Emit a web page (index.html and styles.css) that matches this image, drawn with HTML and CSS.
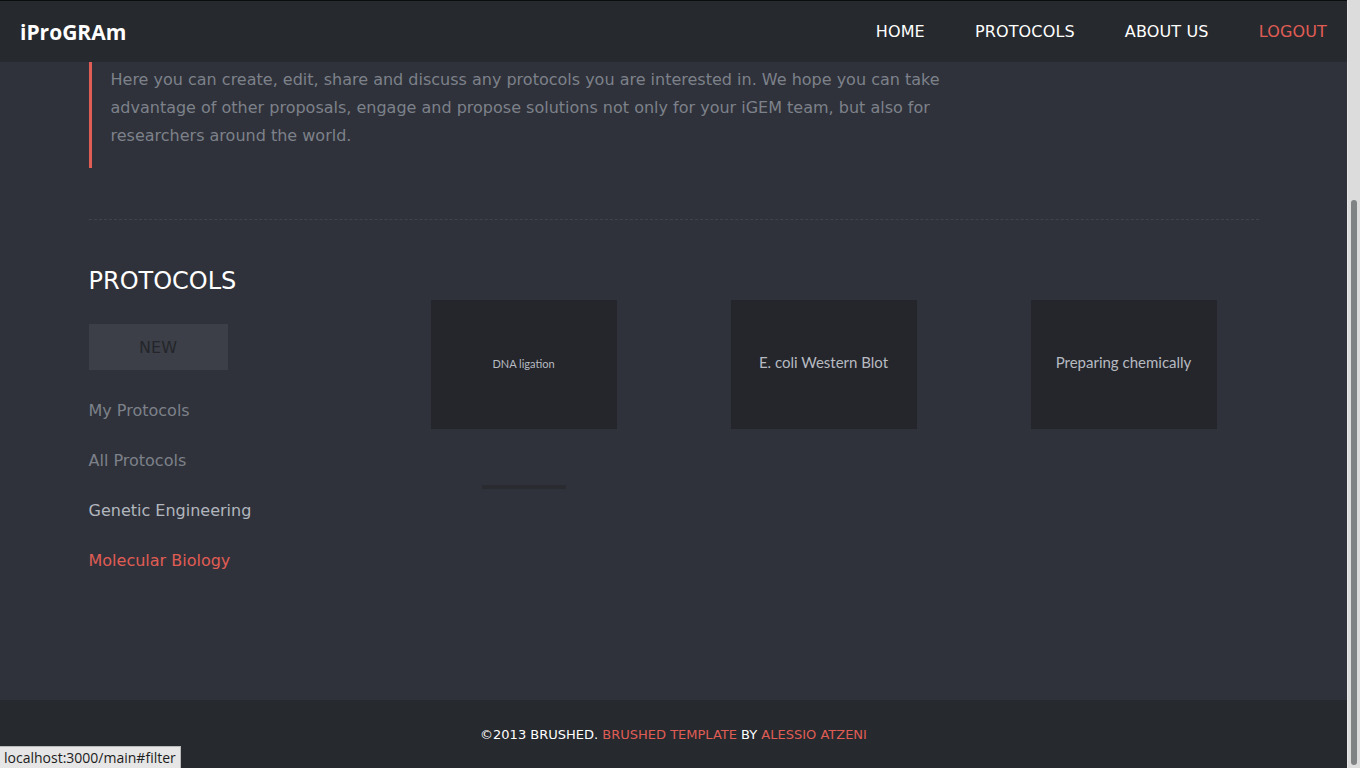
FILE: index.html
```html
<!DOCTYPE html>
<html lang="en">
<head>
<meta charset="utf-8">
<title>iProGRAm</title>
<link rel="stylesheet" href="styles.css">
</head>
<body>
<div class="page">
  <header class="nav">
    <a class="logo" href="#">iProGRAm</a>
    <nav class="menu">
      <a href="#">HOME</a>
      <a href="#">PROTOCOLS</a>
      <a href="#">ABOUT US</a>
      <a href="#" class="logout">LOGOUT</a>
    </nav>
  </header>
  <main class="main">
    <div class="container">
      <blockquote class="intro">Here you can create, edit, share and discuss any protocols you are interested in. We hope you can take advantage of other proposals, engage and propose solutions not only for your iGEM team, but also for researchers around the world.</blockquote>
      <div class="divider"></div>
      <section class="protocols">
        <aside class="sidebar">
          <h2 class="title">PROTOCOLS</h2>
          <a class="btn-new" href="#">NEW</a>
          <ul class="filters">
            <li><a href="#">My Protocols</a></li>
            <li><a href="#">All Protocols</a></li>
            <li><a href="#" class="hover">Genetic Engineering</a></li>
            <li><a href="#" class="active">Molecular Biology</a></li>
          </ul>
        </aside>
        <div class="cards">
          <div class="grid">
            <a class="card small" href="#">DNA ligation</a>
            <a class="card" href="#">E. coli Western Blot</a>
            <a class="card" href="#">Preparing chemically</a>
          </div>
          <div class="pager"></div>
        </div>
      </section>
    </div>
  </main>
  <footer class="footer">
    <p>©2013 BRUSHED. <a href="#">BRUSHED TEMPLATE</a> BY <a href="#">ALESSIO ATZENI</a></p>
  </footer>
</div>
<div class="scrollbar"><div class="thumb"></div></div>
<div class="status">localhost:3000/main#filter</div>
</body>
</html>
```
FILE: styles.css
```css
* { box-sizing: border-box; }
html, body { margin: 0; height: 100%; }
body {
  display: flex;
  overflow: hidden;
  background: #2f323a;
  font-family: "DejaVu Sans", sans-serif;
}
a { text-decoration: none; }

.page {
  flex: 1;
  display: flex;
  flex-direction: column;
  min-width: 0;
}

.nav {
  height: 62px;
  border-top: 1px solid #0b0c0e;
  background: #26292e;
  display: flex;
  align-items: center;
  justify-content: space-between;
  padding: 0 20px;
}
.logo {
  font-family: "Open Sans", sans-serif;
  font-weight: 700;
  font-size: 21px;
  color: #ffffff;
}
.menu { display: flex; gap: 50px; }
.menu a { color: #ffffff; font-size: 16px; letter-spacing: 0.15px; }
.menu a.logout { color: #e05d55; }

.main { flex: 1; }
.container { width: 1170px; margin: 0 auto; }

.intro {
  margin: 0;
  width: 870px;
  border-left: 3px solid #e05d55;
  padding: 4px 0 18px 19px;
  color: #7d818a;
  font-size: 16px;
  line-height: 28px;
}

.divider {
  margin-top: 51px;
  border-top: 1px dashed #40434c;
}

.protocols {
  display: flex;
  margin-top: 45px;
}
.sidebar { width: 342px; flex-shrink: 0; }
.title {
  margin: 0;
  font-weight: normal;
  font-size: 24px;
  line-height: 32px;
  color: #ffffff;
}
.btn-new {
  display: flex;
  align-items: center;
  justify-content: center;
  width: 139px;
  height: 46px;
  margin-top: 27px;
  background: #3c3f47;
  color: #24262b;
  font-size: 16px;
}
.filters {
  list-style: none;
  margin: 31px 0 0;
  padding: 0;
  display: flex;
  flex-direction: column;
  gap: 30px;
}
.filters a {
  display: block;
  font-size: 16px;
  line-height: 20px;
  color: #7d818a;
}
.filters a.hover { color: #b2b6be; }
.filters a.active { color: #e05d55; }

.cards { padding-top: 35px; }
.grid {
  display: grid;
  grid-template-columns: repeat(3, 186px);
  column-gap: 114px;
}
.card {
  height: 129px;
  padding-bottom: 6px;
  background: #24262b;
  color: #b7bac1;
  display: flex;
  align-items: center;
  justify-content: center;
  font-family: Lato, sans-serif;
  font-size: 15px;
}
.card.small { font-size: 11px; padding-bottom: 2px; }
.pager {
  width: 84px;
  height: 4px;
  margin: 56px 0 0 51px;
  background: #292b31;
}

.footer {
  height: 68px;
  background: #26292e;
  display: flex;
  align-items: center;
  justify-content: center;
}
.footer p {
  margin: 0;
  font-size: 13px;
  color: #ffffff;
}
.footer a { color: #e05d55; }

.scrollbar {
  width: 13px;
  flex-shrink: 0;
  background: #dcdcdc;
  border-left: 1px solid #e9e9e9;
  padding-top: 200px;
  padding-bottom: 3px;
  display: flex;
  justify-content: center;
}
.thumb {
  width: 6px;
  height: 565px;
  border-radius: 3px;
  background: #7f8383;
}

.status {
  position: fixed;
  left: 0;
  bottom: 0;
  height: 22px;
  padding: 0 4px 0 4px;
  background: #e6e6e6;
  border: 1px solid #b9b9b9;
  border-left: 0;
  border-bottom: 0;
  color: #1c1c1c;
  font-family: "Open Sans", sans-serif;
  font-size: 14px;
  line-height: 21px;
}
```
